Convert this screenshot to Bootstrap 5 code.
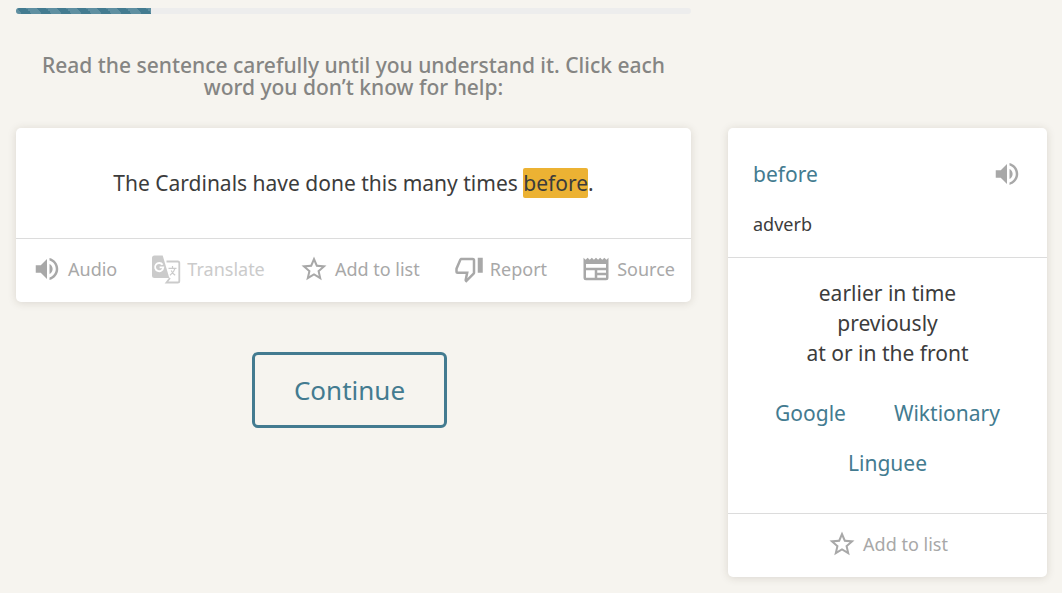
<!DOCTYPE html>
<html lang="en">
<head>
<meta charset="utf-8">
<meta name="viewport" content="width=device-width, initial-scale=1">
<title>Reading practice</title>
<link href="https://cdn.jsdelivr.net/npm/bootstrap@5.3.0/dist/css/bootstrap.min.css" rel="stylesheet">
<style>
  body { background: #f6f4ef; color: #3c3c3c; font-family: "Noto Sans", sans-serif; font-size: 21px; line-height: 30px; }
  .main-col { padding: 8px 17px 0 16px; }
  .side-col { padding: 128px 15px 16px 20px; }
  .lesson-progress { --bs-progress-height: 6px; --bs-progress-bg: #ededed; --bs-progress-border-radius: 3px; --bs-progress-bar-bg: #437b90; }
  .lesson-progress .progress-bar { background-size: 20px 20px; background-image: linear-gradient(-135deg, rgba(255,255,255,.15) 25%, transparent 25%, transparent 50%, rgba(255,255,255,.15) 50%, rgba(255,255,255,.15) 75%, transparent 75%); }
  .instruction { margin: 40px 0 30px; font-size: 21px; line-height: 22px; font-weight: 500; color: #858583; }
  .panel-card { --bs-card-border-width: 0; --bs-card-border-radius: 5px; --bs-card-inner-border-radius: 5px; color: inherit; box-shadow: 0 1px 8px rgba(60, 50, 30, .15); }
  .sentence { padding: 40px 16px; }
  .word-hit { background: #ecb233; border-radius: 2px; display: inline-block; }
  .tool-row { border-top: 1px solid #dcdcdc; height: 64px; padding: 0 16px 3px; }
  .tool { border: 0; background: none; padding: 0; display: inline-flex; align-items: center; gap: 6px; color: #a8a8a8; font-size: 18px; line-height: 30px; }
  .tool:disabled { color: #cbcbcb; }
  .glyph { width: 30px; height: 30px; fill: currentColor; flex: none; }
  .accent { color: #437b90; text-decoration: none; }
  .continue-btn { --bs-btn-color: #437b90; --bs-btn-border-color: #437b90; --bs-btn-border-width: 3px; --bs-btn-border-radius: 6px; --bs-btn-font-size: 26px; --bs-btn-padding-x: 39px; --bs-btn-padding-y: 17px; --bs-btn-line-height: 36px; margin-top: 50px; }
  .word-head { padding: 31px 25px 18px; }
  .pos { font-size: 18px; margin-top: 20px; }
  .senses { border-top: 1px solid #dcdcdc; padding: 20px 24px 35px; }
  .refs { margin-top: 30px; gap: 20px 48px; }
</style>
</head>
<body>
<svg class="d-none" aria-hidden="true">
  <symbol id="i-volume" viewBox="0 0 24 24"><path d="M3 9v6h4l5 5V4L7 9H3zm13.500 3c0-1.770-1.020-3.290-2.500-4.030v8.050c1.480-.73 2.500-2.250 2.500-4.020zM14 3.230v2.060c2.890.86 5 3.540 5 6.710s-2.110 5.850-5 6.710v2.060c4.010-.91 7-4.490 7-8.770s-2.990-7.860-7-8.770z"/></symbol>
  <symbol id="i-star" viewBox="0 0 24 24"><path d="M22 9.240l-7.190-.62L12 2 9.190 8.630 2 9.240l5.460 4.730L5.820 21 12 17.270 18.180 21l-1.630-7.030L22 9.240zM12 15.400l-3.760 2.270 1-4.280-3.320-2.880 4.380-.38L12 6.100l1.710 4.040 4.380.38-3.320 2.880 1 4.280L12 15.400z"/></symbol>
</svg>
<div class="container-fluid p-0">
  <div class="row g-0">
    <main class="col-8 main-col text-center">
      <div class="progress lesson-progress" role="progressbar" aria-label="Lesson progress" aria-valuenow="20" aria-valuemin="0" aria-valuemax="100"><div class="progress-bar" style="width:20%"></div></div>
      <h1 class="instruction px-4">Read the sentence carefully until you understand it. Click each word you don’t know for help:</h1>
      <section class="card panel-card">
        <p class="sentence mb-0">The Cardinals have done this many times <span class="word-hit">before</span>.</p>
        <div class="tool-row d-flex align-items-center justify-content-between">
          <button class="tool" type="button"><svg class="glyph"><use href="#i-volume"/></svg>Audio</button>
          <button class="tool" type="button" disabled><svg class="glyph" viewBox="0 0 30 30"><path d="M3.500 1.500h8.200l6.600 22.500H3.500A2.500 2.500 0 0 1 1 21.500V4a2.500 2.500 0 0 1 2.500-2.500z"/><path d="M11.600 10.800A4.100 4.100 0 1 0 12.300 13.300H8.600" fill="none" stroke="#fff" stroke-width="1.800"/><path d="M15.500 7.500h11.200a1.600 1.600 0 0 1 1.600 1.600v17.800a1.600 1.600 0 0 1-1.600 1.600H15.500l3.500-4.500" fill="none" stroke="currentColor" stroke-width="1.800"/><path d="M17.500 14.300h8M21.500 12v2.300M24 14.300q-1 4-5 7M20.200 16.500q1.300 3 4 4.800" fill="none" stroke="currentColor" stroke-width="1.200"/></svg>Translate</button>
          <button class="tool" type="button"><svg class="glyph"><use href="#i-star"/></svg>Add to list</button>
          <button class="tool" type="button"><svg class="glyph" viewBox="0 0 24 24"><path d="M19 15V3h4v12h-4M15 3a2 2 0 0 1 2 2v10c0 .550-.220 1.050-.590 1.410L9.830 23l-1.060-1.060c-.270-.270-.440-.640-.440-1.060l.030-.310.950-4.570H3a2 2 0 0 1-2-2v-2c0-.260.050-.500.140-.730l3.020-7.050C4.460 3.500 5.170 3 6 3h9m0 2H5.970L3 12v2h8.780l-1.130 5.320L15 14.970V5z"/></svg>Report</button>
          <button class="tool" type="button"><svg class="glyph" viewBox="0 0 24 24"><path d="M20 11H4V8h16m0 7h-7v-2h7m0 6h-7v-2h7m-9 2H4v-6h7m9.330-8.330L18.670 3 17 4.670 15.330 3l-1.660 1.670L12 3l-1.670 1.670L8.670 3 7 4.670 5.330 3 3.670 4.670 2 3v16a2 2 0 0 0 2 2h16a2 2 0 0 0 2-2V3l-1.670 1.670z"/></svg>Source</button>
        </div>
      </section>
      <button class="btn continue-btn me-2" type="button">Continue</button>
    </main>
    <aside class="col-4 side-col">
      <section class="card panel-card">
        <div class="word-head">
          <div class="d-flex justify-content-between align-items-center"><a class="accent" href="#">before</a><button class="tool" type="button" aria-label="Play audio"><svg class="glyph"><use href="#i-volume"/></svg></button></div>
          <p class="pos mb-0">adverb</p>
        </div>
        <div class="senses text-center">
          <div>earlier in time</div><div>previously</div><div>at or in the front</div>
          <nav class="refs d-flex flex-wrap justify-content-center"><a class="accent" href="#">Google</a><a class="accent" href="#">Wiktionary</a><a class="accent" href="#">Linguee</a></nav>
        </div>
        <div class="tool-row d-flex align-items-center justify-content-center"><button class="tool" type="button"><svg class="glyph"><use href="#i-star"/></svg>Add to list</button></div>
      </section>
    </aside>
  </div>
</div>
<script src="https://cdn.jsdelivr.net/npm/bootstrap@5.3.0/dist/js/bootstrap.bundle.min.js"></script>
</body>
</html>
